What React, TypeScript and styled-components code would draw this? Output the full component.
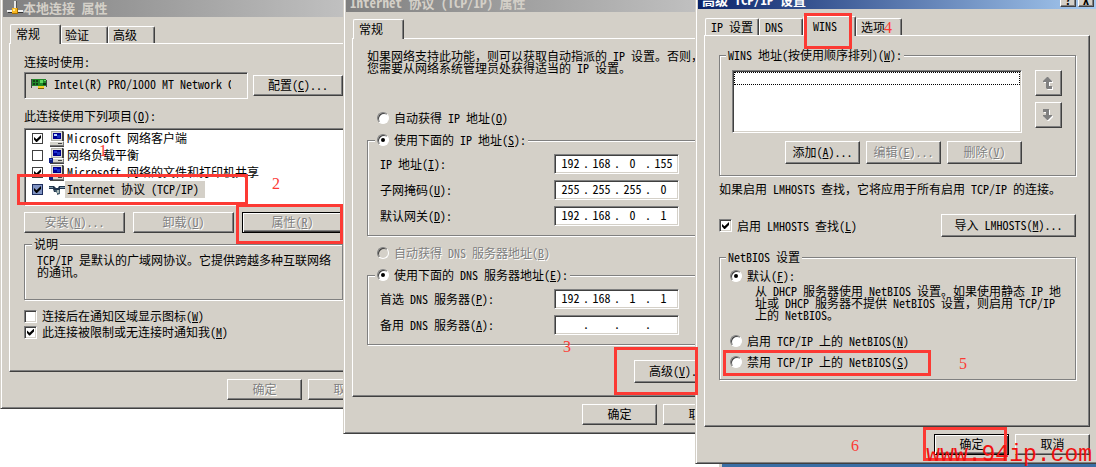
import React from 'react';
import styled, { createGlobalStyle, css } from 'styled-components';

const face = '#d4d0c8';
const shade = '#808080';
const dark = '#404040';
const red = '#fc3a34';

const GlobalStyle = createGlobalStyle`
  * { box-sizing: border-box; }
  body {
    margin: 0;
    background: #fff;
    color: #000;
    font-family: "Noto Sans CJK SC", "Liberation Mono", monospace;
    font-feature-settings: "hwid";
    font-size: 12px;
    line-height: 14px;
    white-space: nowrap;
    overflow: hidden;
  }
  button, input { font: inherit; font-feature-settings: inherit; color: inherit; margin: 0; }
  u { text-underline-offset: 1px; }
`;

const raised = css`
  border: 1px solid;
  border-color: #fff ${dark} ${dark} #fff;
  box-shadow: inset -1px -1px ${shade};
`;

const sunken = css`
  border: 1px solid;
  border-color: ${shade} #fff #fff ${shade};
  box-shadow: inset 1px 1px ${dark}, inset -1px -1px ${face};
`;

const etched = css`
  border: 1px solid ${shade};
  box-shadow: inset 1px 1px #fff, 1px 1px #fff;
`;

const disabledText = css`
  color: ${shade};
  text-shadow: 1px 1px #fff;
`;

const Desktop = styled.main`
  display: grid;
  grid-template-columns: 343fr 352fr 401fr;
  height: 100vh;
  min-height: 467px;
`;

const Pane = styled.section`
  position: relative;
  min-width: 0;
  display: flex;
  flex-direction: column;
`;

const Dialog = styled.div`
  flex: none;
  overflow: hidden;
  background: ${face};
  border-left: 1px solid ${face};
  border-bottom: 1px solid ${dark};
  box-shadow: inset 1px 0 #fff, inset 0 -1px ${shade};
  padding: 0 0 8px 2px;
`;

const TitleBar = styled.header<{ $height: number; $active?: boolean }>`
  display: flex;
  align-items: flex-end;
  justify-content: space-between;
  height: ${(p) => p.$height}px;
  padding: 0 2px 2px 4px;
  overflow: hidden;
  background: ${(p) =>
    p.$active
      ? 'linear-gradient(90deg, #0a246a, #a6caf0)'
      : 'linear-gradient(90deg, #808080, #c0c0c0)'};
  color: ${(p) => (p.$active ? '#fff' : face)};
`;

const Title = styled.h1`
  display: flex;
  align-items: center;
  margin: 0;
  font-size: 13px;
  line-height: 14px;
  font-weight: 700;
`;

const CaptionButtons = styled.div`
  display: flex;
  gap: 2px;
`;

const CaptionButton = styled.button`
  ${raised}
  width: 16px;
  height: 14px;
  padding: 0;
  background: ${face};
  color: #000;
  font-weight: 700;
  line-height: 10px;
`;

const Body = styled.div<{ $right?: number }>`
  padding: 7px ${(p) => p.$right ?? 0}px 0 6px;
`;

const Tabs = styled.div`
  display: flex;
  align-items: flex-end;
  height: 19px;
  padding-left: 1px;
`;

const Tab = styled.button<{ $active?: boolean; $width: number; $start?: number }>`
  width: ${(p) => p.$width}px;
  height: ${(p) => (p.$active ? 20 : 17)}px;
  margin-bottom: ${(p) => (p.$active ? -1 : 0)}px;
  padding: 0 0 ${(p) => (p.$active ? 2 : 0)}px ${(p) => p.$start ?? 5}px;
  text-align: left;
  background: ${face};
  border: solid;
  border-width: 1px 1px 0 1px;
  border-color: #fff ${dark} #fff #fff;
  border-radius: 2px 2px 0 0;
  box-shadow: inset -1px 0 ${shade};
  position: relative;
  z-index: ${(p) => (p.$active ? 1 : 0)};
`;

const TabPanel = styled.div<{ $top: number; $bottom: number; $framed?: boolean }>`
  display: flex;
  flex-direction: column;
  padding: ${(p) => p.$top}px ${(p) => (p.$framed ? 13 : 0)}px ${(p) => p.$bottom}px 14px;
  border: 1px solid;
  border-color: #fff ${dark} ${dark} #fff;
  border-right-width: ${(p) => (p.$framed ? 1 : 0)}px;
  box-shadow: inset ${(p) => (p.$framed ? -1 : 0)}px -1px ${shade};
`;

const Footer = styled.footer<{ $overhang?: number }>`
  display: flex;
  justify-content: flex-end;
  gap: 6px;
  padding-top: 7px;
  margin-right: -${(p) => p.$overhang ?? 0}px;
`;

const Button = styled.button<{ $width?: number; $height?: number; $default?: boolean }>`
  ${raised}
  flex: none;
  width: ${(p) => p.$width ?? 75}px;
  height: ${(p) => p.$height ?? 21}px;
  padding: 0 0 2px;
  background: ${face};
  line-height: 14px;
  ${(p) => p.$default && css`
    border-color: #000;
    box-shadow: inset 1px 1px #fff, inset -1px -1px ${dark}, inset -2px -2px ${shade};
  `}
  &:disabled { ${disabledText} }
`;

const Text = styled.p<{ $before?: number; $indent?: number; $tight?: boolean }>`
  margin: ${(p) => p.$before ?? 0}px 0 0 ${(p) => p.$indent ?? 0}px;
  line-height: ${(p) => (p.$tight ? 12 : 14)}px;
`;

const FullWidth = styled.span`
  font-feature-settings: normal;
`;

const Row = styled.div<{ $before?: number; $gap?: number; $justify?: string; $overhang?: number }>`
  display: flex;
  align-items: center;
  justify-content: ${(p) => p.$justify ?? 'flex-start'};
  gap: ${(p) => p.$gap ?? 0}px;
  margin-top: ${(p) => p.$before ?? 0}px;
  margin-right: -${(p) => p.$overhang ?? 0}px;
`;

const Group = styled.fieldset<{ $before?: number; $pad: string; $open?: boolean }>`
  ${etched}
  min-width: 0;
  margin: ${(p) => p.$before ?? 0}px 0 0;
  padding: ${(p) => p.$pad};
  ${(p) => p.$open && 'border-right: 0;'}
`;

const Legend = styled.legend<{ $start?: number }>`
  margin-left: ${(p) => p.$start ?? 0}px;
  padding: 0 2px;
  height: 14px;
  background: ${face};
  position: relative;
`;

const Choice = styled.label<{ $before?: number; $indent?: number; $height?: number; $disabled?: boolean }>`
  display: flex;
  align-items: center;
  gap: 5px;
  height: ${(p) => p.$height ?? 14}px;
  margin: ${(p) => p.$before ?? 0}px 0 0 ${(p) => p.$indent ?? 0}px;
  ${(p) => p.$disabled && disabledText}
`;

const tick = css`
  &:checked::after {
    content: "";
    width: 7px;
    height: 7px;
    background: #000;
    clip-path: polygon(0 28%, 0 65%, 30% 100%, 43% 100%, 100% 43%, 100% 0, 36% 60%);
  }
`;

const CheckBox = styled.input.attrs({ type: 'checkbox' })`
  ${sunken}
  ${tick}
  appearance: none;
  display: grid;
  place-content: center;
  flex: none;
  width: 13px;
  height: 13px;
  background: #fff;
`;

const FlatCheck = styled.input.attrs({ type: 'checkbox' })<{ $marked?: boolean }>`
  ${tick}
  appearance: none;
  display: grid;
  place-content: center;
  flex: none;
  width: 11px;
  height: 11px;
  border: 1px solid ${(p) => (p.$marked ? '#1c2c5c' : dark)};
  background: ${(p) => (p.$marked ? '#8094c4' : '#fff')};
`;

const Radio = styled.input.attrs({ type: 'radio' })`
  appearance: none;
  display: grid;
  place-content: center;
  flex: none;
  width: 12px;
  height: 12px;
  border: 1px solid;
  border-color: ${shade} #fff #fff ${shade};
  border-radius: 50%;
  background: #fff;
  box-shadow: inset 1px 1px ${dark};
  &:disabled { background: ${face}; }
  &:checked::after {
    content: "";
    width: 4px;
    height: 4px;
    border-radius: 50%;
    background: #000;
  }
`;

const DeviceBox = styled.div`
  ${sunken}
  display: flex;
  align-items: center;
  gap: 6px;
  flex: 1;
  height: 27px;
  padding: 0 16px 4px 6px;
  overflow: hidden;
`;

const DeviceName = styled.span`
  flex: 1;
  min-width: 0;
  overflow: hidden;
`;

const ItemList = styled.ul`
  border: 1px solid;
  border-color: ${shade} transparent #fff ${shade};
  box-shadow: inset 1px 1px ${dark};
  border-right: 0;
  height: 78px;
  margin: 5px 0 0;
  padding: 1px 0 0 7px;
  list-style: none;
  background: #fff;
`;

const Item = styled.li`
  height: 17px;
`;

const ItemLabel = styled.label`
  display: flex;
  align-items: center;
  height: 17px;
  svg { margin-left: 6px; }
`;

const ItemText = styled.span<{ $selected?: boolean }>`
  height: 17px;
  line-height: 16px;
  padding: 0 6px 0 2px;
  background: ${(p) => (p.$selected ? face : 'transparent')};
`;

const AddressRow = styled.div`
  display: flex;
  align-items: center;
  justify-content: space-between;
  & + & { margin-top: 6px; }
`;

const AddressBox = styled.div`
  ${sunken}
  display: flex;
  align-items: center;
  width: 125px;
  height: 20px;
  padding: 0 0 2px 3px;
  background: #fff;
`;

const Octet = styled.input`
  width: 25px;
  height: 14px;
  padding: 0;
  border: 0;
  background: transparent;
  text-align: center;
`;

const Dot = styled.span`
  width: 6px;
`;

const WinsArea = styled.div`
  display: grid;
  grid-template-columns: 1fr 27px;
  column-gap: 13px;
  row-gap: 8px;
`;

const WinsList = styled.div`
  ${sunken}
  height: 63px;
  padding: 1px;
  background: #fff;
`;

const FocusRow = styled.div`
  height: 13px;
  border: 1px dotted #000;
`;

const ArrowColumn = styled.div`
  display: flex;
  flex-direction: column;
  height: 63px;
  gap: 6px;
`;

const ArrowButton = styled.button`
  ${raised}
  display: grid;
  place-content: center;
  flex: none;
  height: 26px;
  padding: 0;
  background: ${face};
`;

const Taskline = styled.div`
  flex: 1;
  margin-left: 24px;
  border-left: 3px solid ${face};
  background: #3a6ea5;
`;

type Spot = { $x: number; $y: number; $fromRight?: boolean };
const spot = css<Spot>`
  position: absolute;
  z-index: 3;
  pointer-events: none;
  top: ${(p) => p.$y}px;
  ${(p) => (p.$fromRight ? 'right' : 'left')}: ${(p) => p.$x}px;
`;

const Frame = styled.div<Spot & { $w: number; $h: number }>`
  ${spot}
  width: ${(p) => p.$w}px;
  height: ${(p) => p.$h}px;
  border: 3px solid ${red};
`;

const Step = styled.span<Spot>`
  ${spot}
  color: ${red};
  font-family: "Liberation Serif", serif;
  font-size: 16px;
  line-height: 16px;
`;

const Watermark = styled.span<Spot>`
  ${spot}
  color: #f01010;
  font-family: "Liberation Mono", monospace;
  font-size: 23px;
  line-height: 24px;
`;

const ConnectionIcon = () => (
  <svg width="16" height="14" viewBox="0 0 16 14" aria-hidden="true">
    <path d="M7 0h3v7H7z" fill="#e8e8e8" />
    <path d="M9 0h1v7H9z" fill="#555" />
    <path d="M0 9h5v2H0zM11 9h5v2h-5z" fill="#f0f0f0" />
    <path d="M1 11h4v1H1zM11 11h5v1h-5z" fill="#333" />
    <path d="M5 7h6v6H5z" fill="#a87000" />
    <path d="M5 7h5v5H5z" fill="#f8b820" />
    <path d="M6 8h2v2H6z" fill="#ffe890" />
  </svg>
);

const AdapterIcon = () => (
  <svg width="17" height="12" viewBox="0 0 17 12" aria-hidden="true">
    <path d="M0 1h1v9H0z" fill="#444" />
    <path d="M1 1h14v7H1z" fill="#208828" />
    <path d="M2 2h2v2H2zM5 2h2v2H5zM2 5h2v2H2zM5 5h2v2H5z" fill="#143c18" />
    <path d="M9 2h3v3H9zM13 2h2v1h-2z" fill="#60d860" />
    <path d="M12 5h3v2h-3z" fill="#083808" />
    <path d="M7 8h6v3H7z" fill="#806000" />
    <path d="M7 8h6v2H7z" fill="#f0d020" />
    <path d="M15 2h1v7h-1z" fill="#444" />
  </svg>
);

const ComputerIcon = ({ networked }: { networked?: boolean }) => (
  <svg width="16" height="16" viewBox="0 0 16 16" aria-hidden="true">
    <path d="M3 0h11l1 1v9H3z" fill="#444" />
    <path d="M2 0h11v10H2z" fill="#b0b0a8" />
    <path d="M3 1h10v8H3z" fill="#e0e0d8" />
    <path d="M4 2h8v6H4z" fill="#000090" />
    <path d="M5 3h3v2H5z" fill={networked ? '#2030d8' : '#c0d8ff'} />
    <path d="M8 4h3v3H8z" fill="#1830c0" />
    <path d="M1 11h13l1-1v5H1z" fill="#777" />
    <path d="M1 11h13v3H1z" fill="#d4d4cc" />
    <path d="M9 12h4v1H9z" fill="#444" />
    <path d="M1 15h14v1H1z" fill="#444" />
    {networked && <path d="M0 10h4v5H0z" fill="#102080" />}
    {networked && <path d="M1 11h2v1H1z" fill="#4868e0" />}
  </svg>
);

const ProtocolIcon = () => (
  <svg width="16" height="16" viewBox="0 0 16 16" aria-hidden="true">
    <path d="M0 4h5l2 2h2l1-2h6v3h-5v3H9V8H7v2H5L4 7H0z" fill="#20344c" />
    <path d="M0 5h4v1H0zM11 5h5v1h-5z" fill="#8098a8" />
    <path d="M5 8l3 3v2l3-1V8z" fill="#486070" />
    <path d="M8 8h2v3H8z" fill="#a8b8b8" />
  </svg>
);

const ArrowIcon = ({ down }: { down?: boolean }) => {
  const d = down
    ? 'M0 0h6v6h3v1l-4 4h-1L0 7V6h3V3H0z'
    : 'M4 0h1l4 4v1H6v4h3v3H4L3 11V5H0V4z';
  return (
    <svg width="11" height="13" viewBox="0 0 11 13" aria-hidden="true">
      <path d={d} transform="translate(1 1)" fill="#fff" />
      <path d={d} fill={shade} />
    </svg>
  );
};

const Key = ({ k }: { k: string }) => <>(<u>{k}</u>)</>;
const Comma = () => <FullWidth>，</FullWidth>;

function Address({ id, label, k, parts }: { id: string; label: string; k: string; parts: string[] }) {
  return (
    <AddressRow>
      <label htmlFor={`${id}-0`}>{label}<Key k={k} />:</label>
      <AddressBox>
        {parts.map((part, i) => (
          <React.Fragment key={i}>
            {i > 0 && <Dot>.</Dot>}
            <Octet id={`${id}-${i}`} aria-label={`${label} ${i + 1}`} defaultValue={part} />
          </React.Fragment>
        ))}
      </AddressBox>
    </AddressRow>
  );
}

function ConnectionDialog() {
  return (
    <Dialog>
      <TitleBar $height={17}>
        <Title><ConnectionIcon />本地连接 属性</Title>
      </TitleBar>
      <Body>
        <Tabs>
          <Tab $active $width={51}>常规</Tab>
          <Tab $width={47} $start={3}>验证</Tab>
          <Tab $width={47} $start={4}>高级</Tab>
        </Tabs>
        <TabPanel $top={11} $bottom={31}>
          <Text>连接时使用:</Text>
          <Row $before={3} $gap={5}>
            <DeviceBox>
              <AdapterIcon />
              <DeviceName>Intel(R) PRO/1000 MT Network C</DeviceName>
            </DeviceBox>
            <Button $width={90}>配置<Key k="C" />...</Button>
          </Row>
          <Text $before={10}>此连接使用下列项目<Key k="O" />:</Text>
          <ItemList>
            <Item><ItemLabel><FlatCheck defaultChecked /><ComputerIcon /><ItemText>Microsoft 网络客户端</ItemText></ItemLabel></Item>
            <Item><ItemLabel><FlatCheck /><ComputerIcon networked /><ItemText>网络负载平衡</ItemText></ItemLabel></Item>
            <Item><ItemLabel><FlatCheck defaultChecked /><ComputerIcon networked /><ItemText>Microsoft 网络的文件和打印机共享</ItemText></ItemLabel></Item>
            <Item><ItemLabel><FlatCheck defaultChecked $marked /><ProtocolIcon /><ItemText $selected>Internet 协议 (TCP/IP)</ItemText></ItemLabel></Item>
          </ItemList>
          <Row $before={6} $gap={8}>
            <Button $width={101} disabled>安装<Key k="N" />...</Button>
            <Button $width={101} disabled>卸载<Key k="U" /></Button>
            <Button $width={101} disabled $default>属性<Key k="R" /></Button>
          </Row>
          <Group $before={4} $pad="3px 0 21px 12px">
            <Legend $start={-5}>说明</Legend>
            <Text $tight>TCP/IP 是默认的广域网协议。它提供跨越多种互联网络<br />的通讯。</Text>
          </Group>
          <Choice $before={8} $height={16}><CheckBox /><span>连接后在通知区域显示图标<Key k="W" /></span></Choice>
          <Choice $height={16}><CheckBox defaultChecked /><span>此连接被限制或无连接时通知我<Key k="M" /></span></Choice>
        </TabPanel>
        <Footer $overhang={40}>
          <Button disabled>确定</Button>
          <Button disabled>取消</Button>
        </Footer>
      </Body>
    </Dialog>
  );
}

function ProtocolDialog() {
  return (
    <Dialog>
      <TitleBar $height={12}>
        <Title>Internet 协议 (TCP/IP) 属性</Title>
      </TitleBar>
      <Body>
        <Tabs>
          <Tab $active $width={51}>常规</Tab>
        </Tabs>
        <TabPanel $top={11} $bottom={13}>
          <Text $tight>
            如果网络支持此功能<Comma />则可以获取自动指派的 IP 设置。否则<Comma /><br />
            您需要从网络系统管理员处获得适当的 IP 设置。
          </Text>
          <Choice $before={37} $indent={10}><Radio name="ip" /><span>自动获得 IP 地址<Key k="O" /></span></Choice>
          <Group $before={8} $pad="7px 16px 9px 12px" $open>
            <Legend $start={-5}>
              <Choice><Radio name="ip" defaultChecked /><span>使用下面的 IP 地址<Key k="S" />:</span></Choice>
            </Legend>
            <Address id="ip" label="IP 地址" k="I" parts={['192', '168', '0', '155']} />
            <Address id="mask" label="子网掩码" k="U" parts={['255', '255', '255', '0']} />
            <Address id="gateway" label="默认网关" k="D" parts={['192', '168', '0', '1']} />
          </Group>
          <Choice $before={10} $indent={10} $disabled><Radio name="dns" disabled /><span>自动获得 DNS 服务器地址<Key k="B" /></span></Choice>
          <Group $before={8} $pad="7px 16px 9px 12px" $open>
            <Legend $start={-5}>
              <Choice><Radio name="dns" defaultChecked /><span>使用下面的 DNS 服务器地址<Key k="E" />:</span></Choice>
            </Legend>
            <Address id="dns1" label="首选 DNS 服务器" k="P" parts={['192', '168', '1', '1']} />
            <Address id="dns2" label="备用 DNS 服务器" k="A" parts={['', '', '', '']} />
          </Group>
          <Row $before={15} $justify="flex-end" $overhang={29}>
            <Button $width={90} $height={23}>高级<Key k="V" />...</Button>
          </Row>
        </TabPanel>
        <Footer $overhang={43}>
          <Button>确定</Button>
          <Button>取消</Button>
        </Footer>
      </Body>
    </Dialog>
  );
}

function AdvancedDialog() {
  return (
    <Dialog>
      <TitleBar $height={9} $active>
        <Title>高级 TCP/IP 设置</Title>
        <CaptionButtons>
          <CaptionButton aria-label="帮助">?</CaptionButton>
          <CaptionButton aria-label="关闭">X</CaptionButton>
        </CaptionButtons>
      </TitleBar>
      <Body $right={6}>
        <Tabs>
          <Tab $width={54}>IP 设置</Tab>
          <Tab $width={44}>DNS</Tab>
          <Tab $active $width={53} $start={9}>WINS</Tab>
          <Tab $width={46} $start={4}>选项</Tab>
        </Tabs>
        <TabPanel $top={12} $bottom={46} $framed>
          <Group $pad="8px 13px 11px 12px">
            <Legend $start={-6}>WINS 地址(按使用顺序排列)<Key k="W" />:</Legend>
            <WinsArea>
              <WinsList><FocusRow /></WinsList>
              <ArrowColumn>
                <ArrowButton aria-label="上移"><ArrowIcon /></ArrowButton>
                <ArrowButton aria-label="下移"><ArrowIcon down /></ArrowButton>
              </ArrowColumn>
              <Row $gap={6} $justify="flex-end">
                <Button $height={23}>添加<Key k="A" />...</Button>
                <Button $height={23} disabled>编辑<Key k="E" />...</Button>
                <Button $height={23} disabled>删除<Key k="V" /></Button>
              </Row>
            </WinsArea>
          </Group>
          <Text $before={6}>如果启用 LMHOSTS 查找<Comma />它将应用于所有启用 TCP/IP 的连接。</Text>
          <Row $before={18} $justify="space-between">
            <Choice><CheckBox defaultChecked /><span>启用 LMHOSTS 查找<Key k="L" /></span></Choice>
            <Button $width={135} $height={23}>导入 LMHOSTS<Key k="M" />...</Button>
          </Row>
          <Group $before={13} $pad="5px 12px 10px 10px">
            <Legend $start={-4}>NetBIOS 设置</Legend>
            <Choice><Radio name="netbios" defaultChecked /><span>默认<Key k="F" />:</span></Choice>
            <Text $tight $before={2} $indent={25}>
              从 DHCP 服务器使用 NetBIOS 设置。如果使用静态 IP 地<br />
              址或 DHCP 服务器不提供 NetBIOS 设置<Comma />则启用 TCP/IP<br />
              上的 NetBIOS。
            </Text>
            <Choice $before={13}><Radio name="netbios" /><span>启用 TCP/IP 上的 NetBIOS<Key k="N" /></span></Choice>
            <Choice $before={7}><Radio name="netbios" /><span>禁用 TCP/IP 上的 NetBIOS<Key k="S" /></span></Choice>
          </Group>
        </TabPanel>
        <Footer>
          <Button $default>确定</Button>
          <Button>取消</Button>
        </Footer>
      </Body>
    </Dialog>
  );
}

export default function App() {
  return (
    <>
      <GlobalStyle />
      <Desktop>
        <Pane>
          <ConnectionDialog />
          <Frame $x={17} $y={174} $w={231} $h={31} />
          <Frame $x={0} $y={204} $w={107} $h={40} $fromRight />
          <Step $x={99} $y={143}>1</Step>
          <Step $x={272} $y={176}>2</Step>
        </Pane>
        <Pane>
          <ProtocolDialog />
          <Frame $x={-3} $y={347} $w={84} $h={48} $fromRight />
          <Step $x={220} $y={339}>3</Step>
        </Pane>
        <Pane>
          <AdvancedDialog />
          <Taskline />
          <Frame $x={109} $y={13} $w={48} $h={36} />
          <Frame $x={28} $y={350} $w={208} $h={26} />
          <Frame $x={89} $y={427} $w={84} $h={34} $fromRight />
          <Step $x={189} $y={20}>4</Step>
          <Step $x={264} $y={356}>5</Step>
          <Step $x={156} $y={438}>6</Step>
          <Watermark $x={4} $y={443} $fromRight>www.94ip.com</Watermark>
        </Pane>
      </Desktop>
    </>
  );
}
